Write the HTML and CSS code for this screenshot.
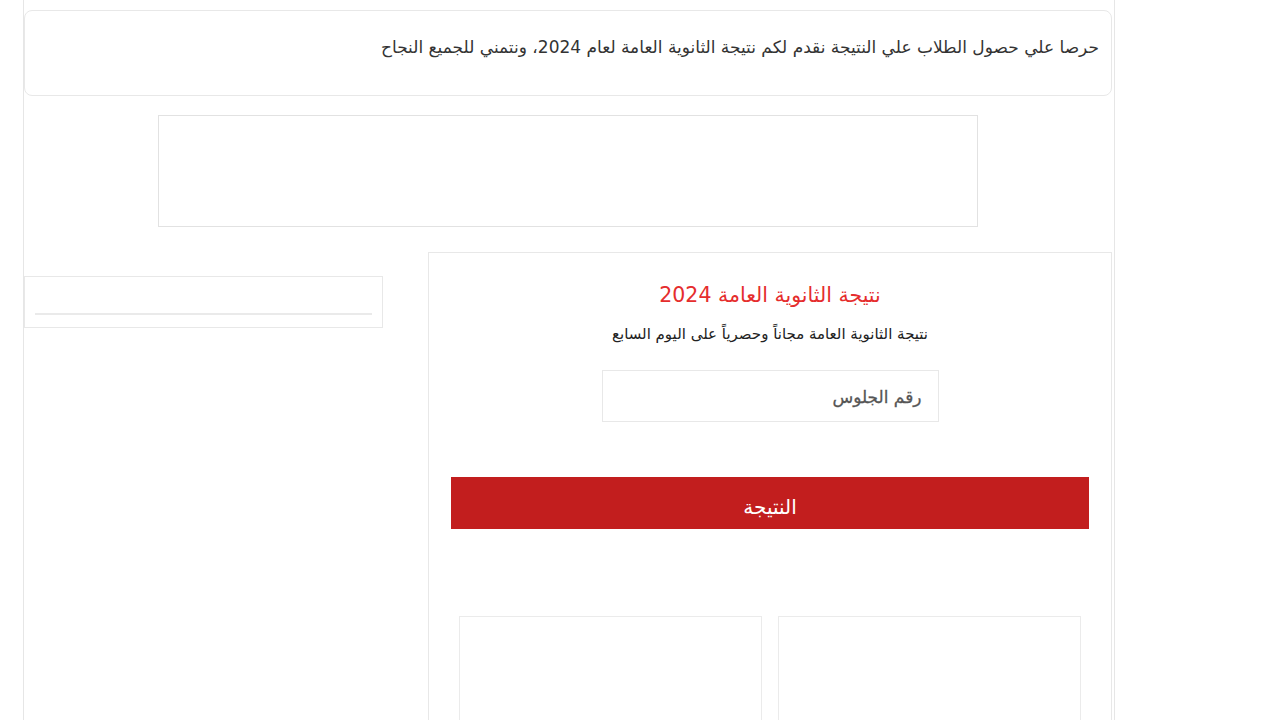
FILE: index.html
```html
<!DOCTYPE html>
<html lang="ar" dir="rtl">
<head>
<meta charset="utf-8">
<title>نتيجة الثانوية العامة 2024</title>
<link rel="stylesheet" href="styles.css">
</head>
<body>
<div class="page">
  <div class="intro">حرصا علي حصول الطلاب علي النتيجة نقدم لكم نتيجة الثانوية العامة لعام 2024، ونتمني للجميع النجاح</div>
  <div class="ad"></div>
  <div class="row">
    <main class="result">
      <h1 class="title">نتيجة الثانوية العامة 2024</h1>
      <p class="sub">نتيجة الثانوية العامة مجاناً وحصرياً على اليوم السابع</p>
      <div class="field"><span class="placeholder">رقم الجلوس</span></div>
      <div class="btn">النتيجة</div>
      <div class="slots">
        <div class="slot"></div>
        <div class="slot"></div>
      </div>
    </main>
    <aside class="side">
      <div class="side-box"><div class="side-line"></div></div>
    </aside>
  </div>
</div>
</body>
</html>
```

FILE: styles.css
```css
html, body {
  margin: 0;
  padding: 0;
  background: #fff;
  height: 720px;
  overflow: hidden;
}
body {
  font-family: "DejaVu Sans", "Noto Sans", sans-serif;
  color: #333;
}
.page {
  direction: rtl;
  width: 1092px;
  margin: 0 auto 0 23px;
  border-left: 1px solid #e6e6e6;
  border-right: 1px solid #e6e6e6;
  min-height: 720px;
  padding-top: 10px;
  box-sizing: border-box;
}
.intro {
  margin-right: 2px;
  height: 86px;
  box-sizing: border-box;
  border: 1px solid #e8e8e8;
  border-radius: 8px;
  padding: 24px 12px 0 12px;
  font-size: 17px;
  line-height: 24px;
  color: #333;
  text-align: right;
}
.ad {
  width: 820px;
  height: 112px;
  box-sizing: border-box;
  border: 1px solid #e2e2e2;
  margin: 19px auto 0 134px;
}
.row {
  display: flex;
  gap: 45px;
  padding-right: 2px;
  margin-top: 25px;
}
.result {
  width: 684px;
  flex-shrink: 0;
  box-sizing: border-box;
  border: 1px solid #e8e8e8;
  border-bottom: none;
  min-height: 470px;
  display: flex;
  flex-direction: column;
  align-items: center;
  padding: 28px 22px 0 22px;
}
.result > * {
  flex-shrink: 0;
}
.title {
  margin: 0;
  font-weight: normal;
  font-size: 20.5px;
  line-height: 28px;
  color: #e52d2d;
}
.sub {
  margin: 15px 0 0 0;
  font-size: 15px;
  line-height: 20px;
  color: #222;
}
.field {
  margin-top: 26px;
  width: 337px;
  height: 52px;
  box-sizing: border-box;
  border: 1px solid #e8e8e8;
  display: flex;
  align-items: center;
  padding: 2px 16px 0 16px;
}
.placeholder {
  font-size: 17px;
  color: #555;
  -webkit-text-stroke: 0.3px #555;
}
.btn {
  margin-top: 55px;
  align-self: stretch;
  height: 52px;
  background: #c21e1e;
  color: #fff;
  font-size: 20px;
  display: flex;
  align-items: center;
  justify-content: center;
  padding-top: 7px;
  box-sizing: border-box;
}
.slots {
  align-self: stretch;
  margin-top: 87px;
  padding: 0 8px;
  display: flex;
  gap: 16px;
}
.slot {
  flex: 1;
  height: 120px;
  box-sizing: border-box;
  border: 1px solid #ebebeb;
}
.side {
  width: 359px;
  flex-shrink: 0;
  padding-top: 24px;
}
.side-box {
  height: 52px;
  box-sizing: border-box;
  border: 1px solid #e8e8e8;
  padding: 36px 10px 0 10px;
}
.side-line {
  height: 2px;
  background: #eaeaea;
}
```
